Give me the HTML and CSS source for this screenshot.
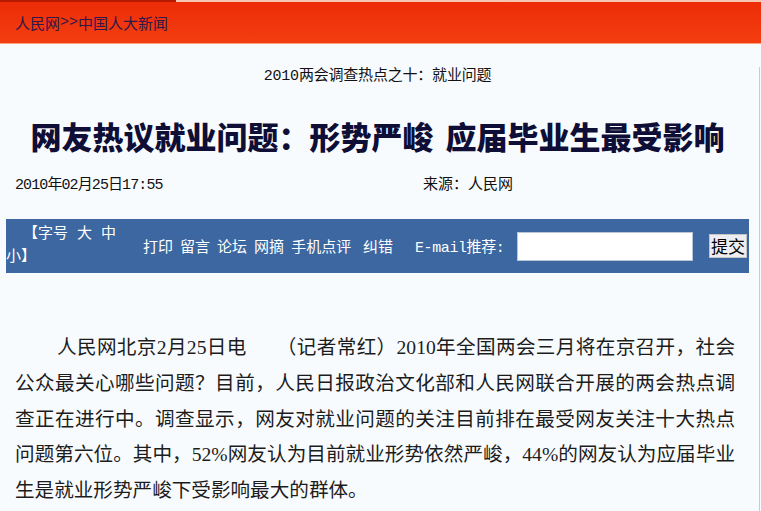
FILE: index.html
```html
<!DOCTYPE html>
<html lang="zh-CN">
<head>
<meta charset="utf-8">
<title>网友热议就业问题：形势严峻 应届毕业生最受影响</title>
<link rel="stylesheet" href="styles.css">
</head>
<body>
<header class="topbar">
  <div class="strip"></div>
  <div class="crumb"><a href="#">人民网</a>&gt;&gt;<a href="#">中国人大新闻</a></div>
</header>
<div class="page">
  <div class="content">
    <p class="subtitle">2010两会调查热点之十：就业问题</p>
    <h1 class="title">网友热议就业问题：形势严峻 应届毕业生最受影响</h1>
    <div class="meta">
      <span class="date">2010年02月25日17:55</span>
      <span class="source">来源：<a href="#">人民网</a></span>
    </div>
    <form class="toolbar">
      <div class="fontsize">【字号 <a href="#">大</a> <a href="#">中</a> <a href="#">小</a>】</div>
      <div class="tools"><a href="#">打印</a> <a href="#">留言</a> <a href="#">论坛</a> <a href="#">网摘</a> <a href="#">手机点评</a></div>
      <div class="correct"><a href="#">纠错</a></div>
      <label class="mail-label">E-mail推荐:</label>
      <input class="mail-input" type="text">
      <button class="submit" type="button">提交</button>
    </form>
    <div class="article">
      <p>人民网北京2月25日电&#12288;&#8194;（记者常红）2010年全国两会三月将在京召开，社会公众最关心哪些问题？目前，人民日报政治文化部和人民网联合开展的两会热点调查正在进行中。调查显示，网友对就业问题的关注目前排在最受网友关注十大热点问题第六位。其中，52%网友认为目前就业形势依然严峻，44%的网友认为应届毕业生是就业形势严峻下受影响最大的群体。</p>
    </div>
  </div>
</div>
</body>
</html>
```

FILE: styles.css
```css
html, body {
  margin: 0;
  padding: 0;
  overflow: hidden;
}

body {
  width: 761px;
  height: 511px;
  background: #f8fbfe;
  color: #1a1a1a;
  font-family: "Liberation Mono", "Noto Sans CJK SC", sans-serif;
}

a {
  color: inherit;
  text-decoration: none;
}

.topbar {
  height: 44px;
  background: linear-gradient(#ec2c08, #f43e10);
  border-bottom: 1px solid #f9a27e;
  box-sizing: border-box;
}

.strip {
  height: 2px;
  background: linear-gradient(to right, #b51b00 0, #b51b00 176px, #f6c6b4 176px);
}

.crumb {
  height: 41px;
  display: flex;
  align-items: center;
  padding-left: 15px;
  font-size: 15px;
  color: #32184a;
}

.page {
  width: 759px;
  min-height: 467px;
  border-right: 1px solid #cacaca;
}

.content {
  margin-left: 6px;
  width: 743px;
}

.subtitle {
  margin: 23px 0 0;
  line-height: 20px;
  font-size: 15px;
  letter-spacing: -0.2px;
  text-align: center;
  color: #111;
}

.title {
  margin: 29px 0 0;
  line-height: 40px;
  font-family: "Noto Sans CJK SC", sans-serif;
  font-size: 31px;
  font-weight: 900;
  word-spacing: 5px;
  text-align: center;
  color: #0e0e36;
}

.meta {
  margin-top: 20px;
  padding-left: 9px;
  display: flex;
  line-height: 20px;
  font-size: 15px;
  color: #111;
}

.date {
  width: 408px;
  letter-spacing: -0.9px;
}

.toolbar {
  margin: 23px 0 0;
  height: 54px;
  background: #3c67a0;
  color: #fff;
  font-size: 15px;
  display: flex;
  align-items: center;
}

.fontsize {
  width: 118px;
  line-height: 23px;
  text-indent: 17px;
}

.tools {
  margin-left: 19px;
  width: 220px;
  word-spacing: -2px;
  white-space: nowrap;
}

.correct {
  width: 52px;
}

.mail-label {
  width: 102px;
  white-space: nowrap;
  letter-spacing: -0.4px;
}

.mail-input {
  width: 176px;
  height: 29px;
  box-sizing: border-box;
  margin: 0;
  padding: 0;
  border: 1px solid #b9c6d8;
  background: #fff;
}

.submit {
  margin-left: 16px;
  width: 38px;
  height: 24px;
  box-sizing: border-box;
  padding: 0;
  border: 1px solid #c4c4c4;
  background: #eeeef2;
  color: #000;
  font-family: "Noto Sans CJK SC", sans-serif;
  font-size: 17px;
  line-height: 22px;
}

.article {
  margin-top: 57px;
  padding-left: 9px;
}

.article p {
  margin: 0;
  width: 720px;
  text-indent: 42px;
  text-align: justify;
  font-family: "Liberation Serif", "Noto Sans CJK SC", serif;
  font-size: 19.6px;
  line-height: 35.75px;
  color: #1c1c1c;
}
```
